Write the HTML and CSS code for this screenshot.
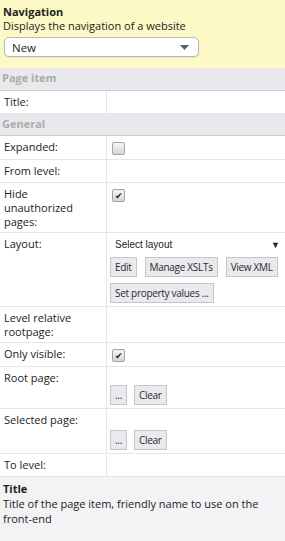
FILE: index.html
```html
<!DOCTYPE html>
<html lang="en">
<head>
    <meta charset="UTF-8">
    <title>Navigation</title>
    <link rel="stylesheet" href="styles.css">
</head>
<body>

<div class="header">
    <div class="header-title">Navigation</div>
    <div class="header-desc">Displays the navigation of a website</div>
    <div class="header-select">
        <span>New</span>
        <svg width="9" height="5" viewBox="0 0 9 5"><path d="M0 0 L9 0 L4.5 5 Z" fill="#4a5f78"/></svg>
    </div>
</div>

<table class="props">
    <tr class="group"><td colspan="2">Page item</td></tr>
    <tr><td class="label">Title:</td><td></td></tr>
    <tr class="group"><td colspan="2">General</td></tr>
    <tr><td class="label">Expanded:</td><td><span class="check"></span></td></tr>
    <tr><td class="label">From level:</td><td></td></tr>
    <tr><td class="label">Hide unauthorized pages:</td><td><span class="check">&#10004;</span></td></tr>
    <tr>
        <td class="label">Layout:</td>
        <td>
            <div class="layout-select"><span>Select layout</span><span class="arrow">&#9660;</span></div>
            <div class="btns">
                <button>Edit</button>
                <button>Manage XSLTs</button>
                <button>View XML</button>
            </div>
            <div class="btns">
                <button>Set property values ...</button>
            </div>
        </td>
    </tr>
    <tr><td class="label">Level relative rootpage:</td><td></td></tr>
    <tr><td class="label">Only visible:</td><td><span class="check">&#10004;</span></td></tr>
    <tr>
        <td class="label">Root page:</td>
        <td><div class="btns picker"><button>...</button><button>Clear</button></div></td>
    </tr>
    <tr>
        <td class="label">Selected page:</td>
        <td><div class="btns picker low"><button>...</button><button>Clear</button></div></td>
    </tr>
    <tr><td class="label">To level:</td><td></td></tr>
</table>

<div class="help">
    <div class="help-title">Title</div>
    <div>Title of the page item, friendly name to use on the front-end</div>
</div>

</body>
</html>
```
FILE: styles.css
```css
body {
    margin: 0;
    font-family: "Open Sans", sans-serif;
    font-size: 11px;
    color: #222;
    background: #fff;
    width: 285px;
    height: 541px;
    display: flex;
    flex-direction: column;
}
.header {
    background-color: #fdf9c6;
    padding: 5px 3px 11px 3px;
}
.header-title {
    font-weight: bold;
    line-height: 14px;
}
.header-desc {
    line-height: 14px;
}
.header-select {
    margin: 4px 0 0 1px;
    width: 195px;
    height: 20px;
    box-sizing: border-box;
    background: #fff;
    border: 1px solid #b8b8b8;
    border-radius: 5px;
    display: flex;
    align-items: center;
    justify-content: space-between;
    padding: 0 9px 0 7px;
    font-size: 11.5px;
    box-shadow: 0 1px 1px rgba(0, 0, 0, 0.1);
}
.props {
    width: 100%;
    border-collapse: collapse;
}
.props tr {
    height: 23px;
}
.props td {
    border-bottom: 1px solid #e6e6e6;
    padding: 4px 3px 3px 3px;
    vertical-align: top;
    line-height: 14px;
}
.props td.label {
    width: 90px;
    padding-left: 4px;
    padding-right: 12px;
    border-right: 1px solid #e6e6e6;
}
.props tr.group {
    height: 22px;
}
.props tr.group td {
    background-color: #e8e8ed;
    color: #acacac;
    font-weight: bold;
    border-bottom: 1px solid #cbcbcf;
    padding: 3px 2px 3px 2px;
}
.check {
    display: block;
    width: 11px;
    height: 11px;
    margin: 2px 0 1px 2px;
    border: 1px solid #a3a3a3;
    border-radius: 2px;
    background: linear-gradient(#f6f6f6, #d6d6d6);
    font-size: 9px;
    line-height: 11px;
    text-align: center;
    color: #222;
}
.layout-select {
    display: flex;
    justify-content: space-between;
    font-family: "Liberation Sans", sans-serif;
    font-size: 10px;
    line-height: 14px;
    padding: 1px 0 0 5px;
}
.layout-select .arrow {
    font-size: 9px;
    margin-right: 2px;
}
.btns {
    display: flex;
    gap: 8px;
    margin-top: 5px;
}
.btns + .btns {
    margin-top: 6px;
}
.btns.picker {
    margin-top: 14px;
    gap: 7px;
}
.btns.picker.low {
    margin-top: 17px;
}
button {
    font-family: "Open Sans", sans-serif;
    font-size: 10px;
    letter-spacing: -0.3px;
    white-space: nowrap;
    color: #2a2a2a;
    background: #e9e9ee;
    border: 1px solid #c6c6ca;
    height: 20px;
    padding: 0 4px;
    margin: 0;
}
.help {
    flex: 1;
    background-color: #f3f3f5;
    padding: 4px 3px;
    line-height: 15px;
}
.help-title {
    font-weight: bold;
}
```
